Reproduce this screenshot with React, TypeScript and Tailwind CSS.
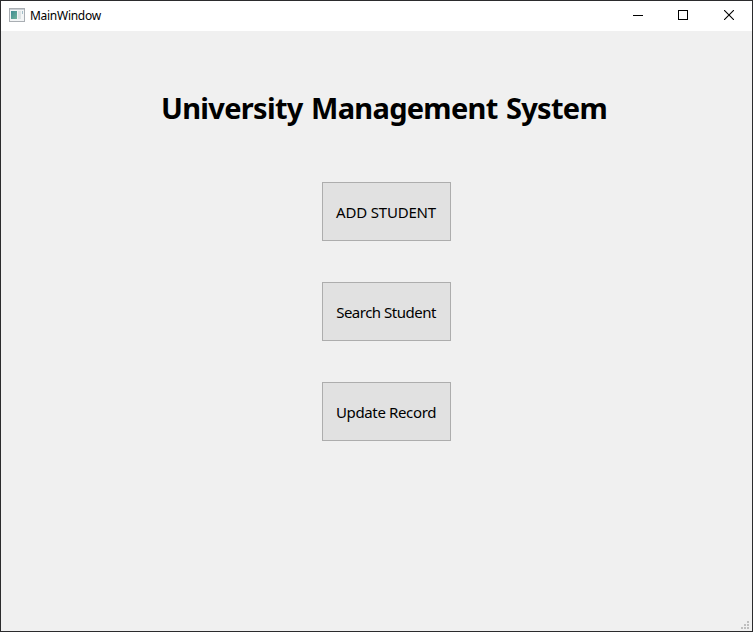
import React from "react";

const actions = [
  { label: "ADD STUDENT", tracking: "tracking-[-0.18px]" },
  { label: "Search Student", tracking: "tracking-[-0.5px]" },
  { label: "Update Record", tracking: "tracking-[-0.36px]" },
];

function WindowIcon() {
  return (
    <svg className="mb-[2px]" width="16" height="14" viewBox="0 0 16 14" shapeRendering="crispEdges">
      <defs>
        <linearGradient id="pane" x1="0" y1="0" x2="1" y2="1">
          <stop offset="0" stopColor="#3f8c93" />
          <stop offset="1" stopColor="#72b39b" />
        </linearGradient>
      </defs>
      <rect x="0.5" y="0.5" width="15" height="13" fill="#f3f5f6" stroke="#a9aeb3" />
      <rect x="1" y="1" width="14" height="1" fill="#c9ced3" />
      <rect x="2" y="3" width="6" height="8" fill="url(#pane)" />
      <rect x="9" y="3" width="3" height="8" fill="#dde3e4" />
      <rect x="13" y="3" width="1" height="3" fill="#a3bfc9" />
    </svg>
  );
}

function TitleBar() {
  return (
    <header className="flex h-[30px] shrink-0 items-center bg-white pl-2">
      <WindowIcon />
      <span className="ml-[5px] flex-1 text-[12px] leading-4 tracking-[-0.28px]">MainWindow</span>
      <button aria-label="Minimize" className="flex h-full w-[45px] items-center justify-center pb-[2px]">
        <svg width="10" height="10" viewBox="0 0 10 10" shapeRendering="crispEdges">
          <rect y="5" width="10" height="1" fill="#000" />
        </svg>
      </button>
      <button aria-label="Maximize" className="flex h-full w-[46px] items-center justify-center pb-[2px]">
        <svg width="10" height="10" viewBox="0 0 10 10" shapeRendering="crispEdges">
          <rect x="0.5" y="0.5" width="9" height="9" fill="none" stroke="#000" />
        </svg>
      </button>
      <button aria-label="Close" className="flex h-full w-[46px] items-center justify-center pb-[2px]">
        <svg width="10" height="10" viewBox="0 0 10 10">
          <path d="M0 0L10 10M10 0L0 10" stroke="#000" strokeWidth="1.1" />
        </svg>
      </button>
    </header>
  );
}

function SizeGrip() {
  return (
    <svg width="8" height="8" viewBox="0 0 8 8" shapeRendering="crispEdges" fill="#bfbfbf">
      <rect x="6" y="0" width="2" height="2" />
      <rect x="3" y="3" width="2" height="2" />
      <rect x="6" y="3" width="2" height="2" />
      <rect x="0" y="6" width="2" height="2" />
      <rect x="3" y="6" width="2" height="2" />
      <rect x="6" y="6" width="2" height="2" />
    </svg>
  );
}

export default function App() {
  return (
    <div className="flex h-[632px] w-[753px] flex-col border border-[#2b2b2d] bg-[#f0f0f0] font-['Noto_Sans','Open_Sans',sans-serif] text-black">
      <TitleBar />
      <main className="flex flex-1 flex-col">
        <h1 className="mt-[57px] pl-[160px] text-[29px] leading-10 font-bold tracking-[-0.7px] [word-spacing:1.5px] whitespace-nowrap">
          University Management System
        </h1>
        <div className="mt-[54px] ml-[321px] flex w-[129px] flex-col gap-[41px]">
          {actions.map(({ label, tracking }) => (
            <button
              key={label}
              className={`h-[59px] border border-[#adadad] bg-[#e1e1e1] pr-[1px] text-[15px] leading-5 whitespace-nowrap ${tracking}`}
            >
              {label}
            </button>
          ))}
        </div>
        <footer className="mt-auto flex justify-end pr-[3px] pb-[2px]">
          <SizeGrip />
        </footer>
      </main>
    </div>
  );
}
